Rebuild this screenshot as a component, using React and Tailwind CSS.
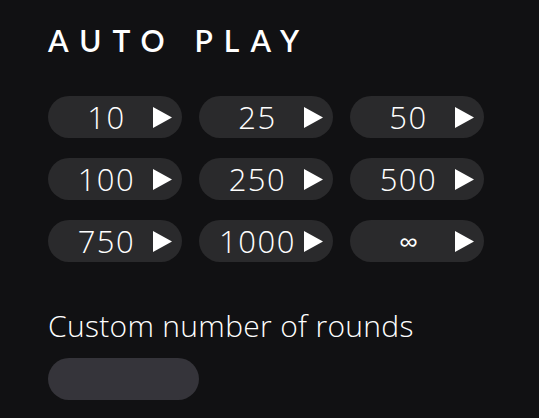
import React from 'react';

const OPTIONS = ['10', '25', '50', '100', '250', '500', '750', '1000', '∞'];

const PlayIcon = () => (
    <svg width="19" height="21" viewBox="0 0 19 21" className="shrink-0">
        <path d="M0 0 L19 10.5 L0 21 Z" fill="#ffffff" />
    </svg>
);

const AutoPlayButton = ({ label }) => {
    const isInfinite = label === '∞';
    return (
        <button className="h-[42px] w-[134px] rounded-full bg-[#2a2a2c] flex items-center pl-[12px] pr-[10px]">
            <span
                className={
                    isInfinite
                        ? 'flex-1 text-center text-white text-[27px] leading-none'
                        : 'flex-1 text-center text-white text-[31px] font-light tracking-[0.05em] leading-none'
                }
            >
                {label}
            </span>
            <PlayIcon />
        </button>
    );
};

const App = () => {
    return (
        <div className="min-h-screen w-full bg-[#111113] font-['Open_Sans','Liberation_Sans',sans-serif] pl-[48px] pt-[25px]">
            <h1 className="text-white text-[30px] font-['Lato',sans-serif] font-semibold tracking-[0.37em] leading-none">
                AUTO PLAY
            </h1>

            <div className="mt-[41px] grid grid-cols-[134px_134px_134px] gap-x-[17px] gap-y-[20px]">
                {OPTIONS.map((opt) => (
                    <AutoPlayButton key={opt} label={opt} />
                ))}
            </div>

            <p className="mt-[49px] text-white text-[30px] font-light tracking-[0.01em] leading-none">
                Custom number of rounds
            </p>
            <div className="mt-[17px] h-[42px] w-[151px] rounded-full bg-[#35343a]" />
        </div>
    );
};

export default App;
